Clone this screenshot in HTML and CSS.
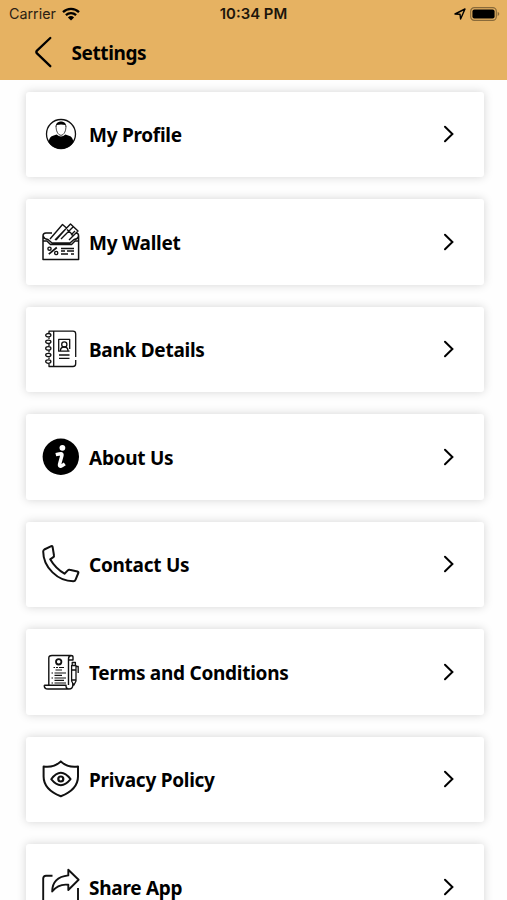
FILE: index.html
```
<!DOCTYPE html>
<html>
	<head>
		<meta charset="utf-8">
		<title>Settings</title>
		<link rel="stylesheet" href="styles.css">
	</head>

	<body>
		<div class="header">
			<div class="statusBar">
				<div class="carrier">
					<span>Carrier</span>
					<svg class="wifi" width="18" height="14" viewBox="0 0 18 14">
						<path d="M1 5.2a11.5 11.5 0 0 1 16 0M3.9 8.2a7.4 7.4 0 0 1 10.2 0" fill="none" stroke="#000" stroke-width="2.3"/>
						<path d="M9 13.6L5.9 10.5a4.5 4.5 0 0 1 6.2 0z"/>
					</svg>
				</div>
				<div class="time">10:34 PM</div>
				<div class="indicators">
					<svg width="12" height="12" viewBox="0 0 12 12">
						<path d="M1 6L11 1L6.6 11L6 6.2z" fill="none" stroke="#000" stroke-width="1.4" stroke-linejoin="round"/>
					</svg>
					<svg width="30" height="14" viewBox="0 0 30 14">
						<rect x=".7" y=".7" width="25.6" height="12.6" rx="3.6" fill="none" stroke="#896a3a" stroke-width="1.2"/>
						<rect x="2.4" y="2.4" width="22.2" height="9.2" rx="2"/>
						<path d="M27.7 4.8q3.2 2.2 0 4.4z" fill="#896a3a"/>
					</svg>
				</div>
			</div>
			<div class="titleBar">
				<svg class="back" width="18" height="32" viewBox="0 0 18 32">
					<path d="M15.3 2L2 14.6Q.6 16 2 17.4L15.3 30.2"/>
				</svg>
				<h1>Settings</h1>
			</div>
		</div>

		<div class="menu">
			<div class="card">
				<svg class="icon" viewBox="0 0 38 38">
					<circle cx="19" cy="19" r="14.5" stroke-width="1.3"/>
					<path class="solid" d="M6.6 27.5Q7 22 11 20.8L14.6 19.6Q19 23.5 23.4 19.6L27 20.8Q31 22 31.4 27.5Q26.5 33.8 19 33.8T6.6 27.5z"/>
					<path d="M14.2 10.5C13.6 15.4 16 20.3 19 20.3S24.4 15.4 23.8 10.5" fill="#fff" stroke-width=".8"/>
					<path class="solid" d="M13.8 12.5C12.6 4.5 25.4 4.5 24.2 12.5L23.3 10Q19 9 14.7 10z"/>
				</svg>
				<span class="label">My Profile</span>
				<svg class="chevron" viewBox="0 0 12 18"><path d="M2 1.8L9.4 9L2 16.2"/></svg>
			</div>

			<div class="card">
				<svg class="icon" viewBox="0 0 38 38">
					<path d="M10 10H4Q1 10 1 13V36.6H36.6V13Q36.6 10 34 10M1 13Q2 16 6 16.5L10 20H28L32 16.5Q36 16 36.6 13M1 18H5L8.5 21.5H29.5L33 18H36.6" stroke-width="1.5"/>
					<path d="M8 16L20.5 1.5L24.5 5L14 17M13 17L28.5 1L36 8L27 17M19 16L31 4M25 6.5L31 12M29 12L33 8" stroke-width="1.4"/>
					<path d="M6.8 31.2L14.8 24.5" stroke-width="1.7"/>
					<circle cx="7.5" cy="25.7" r="1.6" stroke-width="1.4"/>
					<circle cx="14.2" cy="30" r="1.6" stroke-width="1.4"/>
					<path d="M19 25.5H32M19 28H23M25 28H32M19 31H26M29 31H32" stroke-width="1.5"/>
				</svg>
				<span class="label">My Wallet</span>
				<svg class="chevron" viewBox="0 0 12 18"><path d="M2 1.8L9.4 9L2 16.2"/></svg>
			</div>

			<div class="card">
				<svg class="icon" viewBox="0 0 38 38">
					<g stroke-width="1.3">
						<path d="M7 3V1.2H31Q33.7 1.2 33.7 4V27M33.7 30V33.8Q33.7 36.5 31 36.5H7V34M11.7 1.2V36.5M7 7.4V9M7 14V16M7 20.5V22.5M7 27.5V29"/>
						<ellipse cx="6.3" cy="5.2" rx="2.6" ry="1.7"/>
						<ellipse cx="6.3" cy="11.8" rx="2.6" ry="1.7"/>
						<ellipse cx="6.3" cy="18.4" rx="2.6" ry="1.7"/>
						<ellipse cx="6.3" cy="25" rx="2.6" ry="1.7"/>
						<ellipse cx="6.3" cy="31.6" rx="2.6" ry="1.7"/>
						<path d="M27.5 21.2H16.7V9.3H27.7V19M17 25H27.5M17 28.3H27.5"/>
						<circle cx="22.3" cy="14.4" r="2.6"/>
						<path d="M18.4 21C18.4 17.8 20 17 22.3 17S26 17.8 26 21"/>
					</g>
				</svg>
				<span class="label">Bank Details</span>
				<svg class="chevron" viewBox="0 0 12 18"><path d="M2 1.8L9.4 9L2 16.2"/></svg>
			</div>

			<div class="card">
				<svg class="icon" viewBox="0 0 38 38">
					<circle class="solid" cx="18.8" cy="18.8" r="18.2"/>
					<circle cx="20.4" cy="9.8" r="2.9" fill="#fff" stroke="none"/>
					<path d="M13.8 16.6Q17.6 15.7 19 15.7Q20.3 15.9 19.9 17.6L17.6 26.1Q17.2 28.4 18.6 28.2Q20 27.8 22.8 25.9" stroke="#fff" stroke-width="3.5"/>
				</svg>
				<span class="label">About Us</span>
				<svg class="chevron" viewBox="0 0 12 18"><path d="M2 1.8L9.4 9L2 16.2"/></svg>
			</div>

			<div class="card">
				<svg class="icon" viewBox="0 0 38 38">
					<path d="M2.3 4.5L9.3 1.2Q10.3 .8 10.6 2L12 10.5Q12.2 11.5 11.3 12.2L8.2 14.3Q13.5 23.5 22.5 28.7L25.8 25.4Q26.6 24.5 27.6 24.8L35.4 26.4Q36.7 26.8 36.3 28L33.5 34.8Q33 36.3 31.3 36.3C16 36.3 1.2 22.5 1.2 6.5Q1.2 5.2 2.3 4.5z" stroke-width="2"/>
				</svg>
				<span class="label">Contact Us</span>
				<svg class="chevron" viewBox="0 0 12 18"><path d="M2 1.8L9.4 9L2 16.2"/></svg>
			</div>

			<div class="card">
				<svg class="icon" viewBox="0 0 38 38">
					<path d="M6.8 32V5Q6.8 2.5 10 2.5H29Q26.5 3 26.5 6V32M26.5 7H31V4Q31 2.5 29 2.5M2.2 32.2H24Q23.8 36 27 36H6Q2.2 36 2.2 32.2M27 36Q30.8 36 30.8 32V30" stroke-width="1.4"/>
					<circle cx="16.7" cy="8.8" r="2.7" stroke-width="1.8"/>
					<path d="M11.5 14.5H13M14 14.5H16M17 14.5H22M13.5 17H20M9.5 20H11M12.5 20H24M12.5 22.3H20M9.5 25H11M12.5 25H24M12.5 27.3H22M9.5 30H11M12.5 30H24" stroke-width="1.2"/>
					<path d="M29.6 12.5H34V28L31.8 32.3L29.6 28zM29.6 17H34M29.6 27H34M30.2 12.5V9.5H33.4V12.5M34 13.5H36.2V20" stroke-width="1.3"/>
				</svg>
				<span class="label">Terms and Conditions</span>
				<svg class="chevron" viewBox="0 0 12 18"><path d="M2 1.8L9.4 9L2 16.2"/></svg>
			</div>

			<div class="card">
				<svg class="icon" viewBox="0 0 38 38">
					<path d="M18.8 1.4Q26.5 8.2 36 6.5V16.5Q36 29.5 18.8 36.3Q1.6 29.5 1.6 16.5V6.5Q11 8.2 18.8 1.4z" stroke-width="2"/>
					<path d="M9.2 19.2Q18.8 6.4 28.6 19.2Q18.8 31.2 9.2 19.2z" stroke-width="1.9"/>
					<circle cx="18.8" cy="19" r="2.5" stroke-width="2.2"/>
				</svg>
				<span class="label">Privacy Policy</span>
				<svg class="chevron" viewBox="0 0 12 18"><path d="M2 1.8L9.4 9L2 16.2"/></svg>
			</div>

			<div class="card">
				<svg class="icon" viewBox="0 0 38 38">
					<path d="M10.5 7.8H4Q1.2 7.8 1.2 10.5V34Q1.2 36.5 4 36.5H33Q36 36.5 36 34V20" stroke-width="1.9"/>
					<path d="M26.3 1.8L36.6 11.8L26.3 22V16.8Q16.5 15.5 10.2 23.5Q10.2 9.3 26.3 7.4z" stroke-width="1.9"/>
				</svg>
				<span class="label">Share App</span>
				<svg class="chevron" viewBox="0 0 12 18"><path d="M2 1.8L9.4 9L2 16.2"/></svg>
			</div>
		</div>
	</body>
</html>
```
FILE: styles.css
```
* {box-sizing: border-box;}

body
{
	margin: 0;
	height: 900px;
	overflow: hidden;
	background-color: #fefefe;
	color: #000;
	font-family: "Noto Sans", "Open Sans", sans-serif;
}

svg
{
	display: block;
	flex: none;
}

.header
{
	height: 79.5px;
	background-color: #e6b262;
}

.statusBar
{
	display: grid;
	grid-template-columns: 1fr auto 1fr;
	align-items: center;
	height: 27px;
	padding: 0 7px 0 9px;
	font-family: Inter, sans-serif;
	font-size: 14.3px;
}

.carrier
{
	display: flex;
	align-items: center;
	gap: 6px;
	color: #2b2113;
}

.time
{
	margin-right: 2px;
	font-size: 14.9px;
	font-weight: 600;
	color: #1c150b;
}

.indicators
{
	display: flex;
	align-items: center;
	justify-content: flex-end;
	gap: 4px;
}

.titleBar
{
	display: flex;
	align-items: center;
	height: 50px;
	padding-left: 35px;
}

.back path
{
	fill: none;
	stroke: #000;
	stroke-width: 2.3;
	stroke-linecap: round;
}

h1
{
	margin: 1px 0 0 18.5px;
	font-size: 19px;
	font-weight: 700;
	letter-spacing: -0.4px;
}

.menu
{
	display: flex;
	flex-direction: column;
	gap: 22px;
	padding: 12px 23px 0 25.5px;
}

.card
{
	display: flex;
	align-items: center;
	flex: none;
	height: 85.5px;
	padding: 0 29px 0 16.5px;
	border-radius: 3px;
	background-color: #fff;
	box-shadow: 0 0 10px rgba(0, 0, 0, 0.17);
}

.icon
{
	width: 38px;
	height: 38px;
	fill: none;
	stroke: #111;
	stroke-linejoin: round;
}

.icon .solid
{
	fill: #000;
	stroke: none;
}

.label
{
	flex: 1;
	margin: 2px 0 0 9px;
	font-size: 19px;
	font-weight: 700;
	line-height: 26px;
	letter-spacing: -0.27px;
	white-space: nowrap;
}

.chevron
{
	width: 12px;
	height: 18px;
	fill: none;
	stroke: #000;
	stroke-width: 2;
	stroke-linecap: round;
}
```
